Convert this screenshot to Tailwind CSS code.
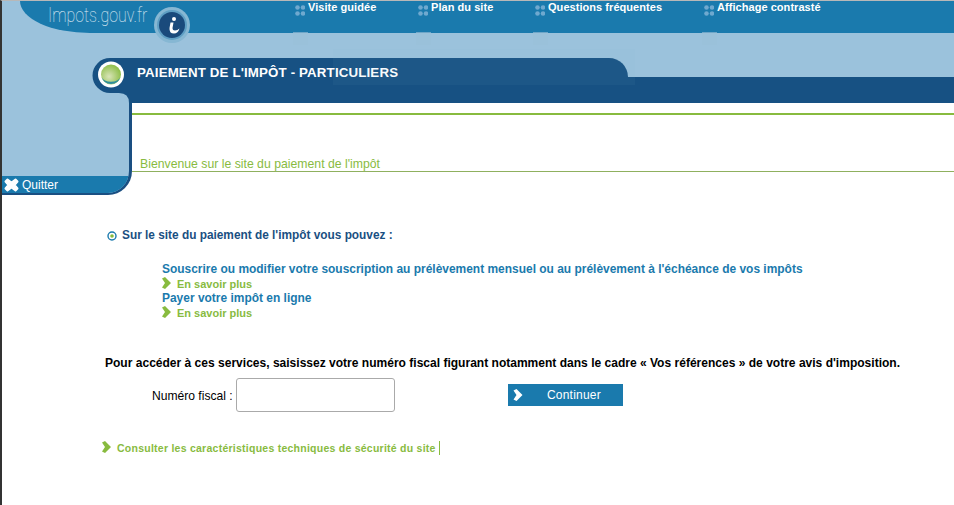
<!DOCTYPE html>
<html lang="fr">
<head>
<meta charset="utf-8">
<title>Paiement de l'impôt</title>
<script src="https://cdn.jsdelivr.net/npm/@tailwindcss/browser@4"></script>
</head>
<body class="bg-white overflow-hidden font-['Liberation_Sans',Arial,sans-serif]">
<div class="relative h-[505px] w-[954px] border-l-2 border-[#333333] border-t border-t-[#b8b8b8]">

  <!-- top bar -->
  <div class="flex h-[32px] bg-[#9bc2dc]">
    <div class="w-[18px]"></div>
    <div class="flex-1 flex bg-[#1a7aad] rounded-bl-[70px_32px]">
      <div class="w-[275px] pl-[28px] pt-[3px]">
        <div class="w-[100px] origin-left scale-x-[.76] text-[21px] leading-[22px] font-thin text-[#e3f0f7] font-['Roboto',sans-serif] whitespace-nowrap">Impots.gouv.fr</div>
      </div>
      <a class="relative w-[123px] flex items-start gap-[3px] text-[11px] leading-[12px] font-bold tracking-[0.05px] text-white">
        <svg class="mt-[4px] shrink-0" width="10" height="11" viewBox="0 0 10 11"><g fill="#6fa9cf"><circle cx="2.5" cy="2.5" r="2.3"/><circle cx="8" cy="2.5" r="2.3"/><circle cx="2.5" cy="8.5" r="2.3"/><circle cx="8" cy="8.5" r="2.3"/></g></svg>
        <span>Visite guidée</span>
        <i class="absolute -left-[2px] top-[31px] w-[15px] h-[13px] border-t border-[#6ea6c8] bg-[#9ac1da]"></i>
      </a>
      <a class="relative w-[117px] flex items-start gap-[3px] text-[11px] leading-[12px] font-bold tracking-[0.05px] text-white">
        <svg class="mt-[4px] shrink-0" width="10" height="11" viewBox="0 0 10 11"><g fill="#6fa9cf"><circle cx="2.5" cy="2.5" r="2.3"/><circle cx="8" cy="2.5" r="2.3"/><circle cx="2.5" cy="8.5" r="2.3"/><circle cx="8" cy="8.5" r="2.3"/></g></svg>
        <span>Plan du site</span>
        <i class="absolute -left-[2px] top-[31px] w-[15px] h-[13px] border-t border-[#6ea6c8] bg-[#9ac1da]"></i>
      </a>
      <a class="relative w-[169px] flex items-start gap-[3px] text-[11px] leading-[12px] font-bold tracking-[0.05px] text-white">
        <svg class="mt-[4px] shrink-0" width="10" height="11" viewBox="0 0 10 11"><g fill="#6fa9cf"><circle cx="2.5" cy="2.5" r="2.3"/><circle cx="8" cy="2.5" r="2.3"/><circle cx="2.5" cy="8.5" r="2.3"/><circle cx="8" cy="8.5" r="2.3"/></g></svg>
        <span>Questions fréquentes</span>
        <i class="absolute -left-[2px] top-[31px] w-[15px] h-[13px] border-t border-[#6ea6c8] bg-[#9ac1da]"></i>
      </a>
      <a class="relative flex items-start gap-[3px] text-[11px] leading-[12px] font-bold tracking-[0.05px] text-white">
        <svg class="mt-[4px] shrink-0" width="10" height="11" viewBox="0 0 10 11"><g fill="#6fa9cf"><circle cx="2.5" cy="2.5" r="2.3"/><circle cx="8" cy="2.5" r="2.3"/><circle cx="2.5" cy="8.5" r="2.3"/><circle cx="8" cy="8.5" r="2.3"/></g></svg>
        <span>Affichage contrasté</span>
        <i class="absolute -left-[2px] top-[31px] w-[15px] h-[13px] border-t border-[#6ea6c8] bg-[#9ac1da]"></i>
      </a>
    </div>
  </div>

  <!-- light band -->
  <div class="h-[25px] bg-[#9bc2dc]"></div>

  <!-- title + side panel -->
  <div class="flex">
    <div class="w-[130px] h-[137px] flex flex-col justify-end bg-[#9bc2dc] border-r-[3px] border-b-[2px] border-[#1a4f82] rounded-br-[24px] overflow-hidden">
      <div class="h-[17px] flex items-center gap-[3px] pl-[2px] bg-[#1a7aad] text-[12px] text-white">
        <svg width="15" height="14" viewBox="0 0 15 14"><path d="M3.5 1.5 L7.5 4.5 L11.5 1.5 L13.5 3.5 L10.5 7 L13.5 10.5 L11.5 12.5 L7.5 9.5 L3.5 12.5 L1.5 10.5 L4.5 7 L1.5 3.5 Z" fill="#fff" stroke="#fff" stroke-width="2" stroke-linejoin="round"/></svg>
        <span>Quitter</span>
      </div>
    </div>
    <div class="flex-1">
      <div class="flex h-[19px] bg-[#9bc2dc]">
        <div class="w-[496px] bg-[#175183] rounded-tr-[22px] pl-[5px] pt-[7px] text-[13.3px] leading-[15px] font-bold tracking-[0.15px] text-white whitespace-nowrap">PAIEMENT DE L'IMPÔT - PARTICULIERS</div>
      </div>
      <div class="h-[26px] bg-[#175183]"></div>
      <div class="mt-[10px] h-[2px] bg-[#88bb3f]"></div>
      <div class="h-[57px] pl-[8px] pt-[42px] border-b border-[#8fb05e] text-[12.25px] leading-[15px] text-[#88bb3f]">Bienvenue sur le site du paiement de l'impôt</div>
    </div>
  </div>

  <!-- main content -->
  <div class="pt-[33px]">
    <div class="flex items-center gap-[5px] pl-[105px] h-[16px] text-[11.85px] font-bold text-[#1a4f82]">
      <svg width="10" height="10" viewBox="0 0 10 10"><circle cx="5" cy="5" r="4" fill="#fff" stroke="#1a7aad" stroke-width="1.4"/><circle cx="5" cy="5" r="1.8" fill="#88bb3f"/></svg>
      <span>Sur le site du paiement de l'impôt vous pouvez :</span>
    </div>
    <div class="pl-[160px] pt-[18px]">
      <div class="h-[15px] text-[11.96px] leading-[15px] font-bold text-[#1a7aad]">Souscrire ou modifier votre souscription au prélèvement mensuel ou au prélèvement à l'échéance de vos impôts</div>
      <div class="h-[14px] flex items-center gap-[6px] text-[11px] font-bold text-[#88bb3f]">
        <svg width="9" height="12" viewBox="0 0 9 12" class="-mt-[2px]"><path d="M0 1.5 L3 0 L9 6 L3 12 L0 10.5 L3 6 Z" fill="#88bb3f"/></svg>
        <span>En savoir plus</span>
      </div>
      <div class="h-[15px] text-[11.96px] leading-[15px] font-bold text-[#1a7aad]">Payer votre impôt en ligne</div>
      <div class="h-[14px] flex items-center gap-[6px] text-[11px] font-bold text-[#88bb3f]">
        <svg width="9" height="12" viewBox="0 0 9 12" class="-mt-[2px]"><path d="M0 1.5 L3 0 L9 6 L3 12 L0 10.5 L3 6 Z" fill="#88bb3f"/></svg>
        <span>En savoir plus</span>
      </div>
    </div>
    <div class="pl-[103px] pt-[36px] h-[15px] leading-[15px] text-[12.04px] font-bold text-black box-content whitespace-nowrap">Pour accéder à ces services, saisissez votre numéro fiscal figurant notamment dans le cadre « Vos références » de votre avis d'imposition.</div>
    <div class="flex items-center pl-[150px] pt-[7px]">
      <label class="w-[84px] mt-[2px] text-[12.1px] text-black whitespace-nowrap">Numéro fiscal :</label>
      <input type="text" class="w-[159px] h-[34px] bg-white border border-[#aaaaaa] rounded-[3px]">
      <button class="ml-[113px] w-[115px] h-[22px] flex items-center bg-[#1a7aad] text-[12px] tracking-[0.2px] text-white">
        <svg class="ml-[5px]" width="10" height="12" viewBox="0 0 9 12"><path d="M0 1.5 L3 0 L9 6 L3 12 L0 10.5 L3 6 Z" fill="#fff"/></svg>
        <span class="ml-[24px]">Continuer</span>
      </button>
    </div>
    <div class="flex items-center pl-[100px] pt-[29px]">
      <svg width="9" height="12" viewBox="0 0 9 12" class="-mt-[2px]"><path d="M0 1.5 L3 0 L9 6 L3 12 L0 10.5 L3 6 Z" fill="#88bb3f"/></svg>
      <span class="ml-[6px] pr-[3px] h-[14px] leading-[14px] border-r border-[#88bb3f] text-[10.5px] font-bold tracking-[0.25px] text-[#88bb3f]">Consulter les caractéristiques techniques de sécurité du site</span>
    </div>
  </div>

  <!-- faint texture around the title tab -->
  <div class="absolute left-[331px] top-[48px] w-[302px] h-[36px] bg-[#8cb8cc]/[.06]"></div>

  <!-- logo badge overlay -->
  <div class="absolute left-[152px] top-[6px] w-[36px] h-[36px] rounded-full bg-[#86b7d3] flex items-center justify-center">
    <div class="w-[26px] h-[26px] rounded-full bg-[#1a4a7c] ring-2 ring-[#5f9fc4]">
      <svg width="26" height="26" viewBox="0 0 26 26"><circle cx="15" cy="7" r="2" fill="#fff"/><path d="M11.5 10.5 H14.5 L13.5 16 Q13.5 18.5 16 18.5 Q18.5 18.5 20.5 16.5 Q19 21.5 15 21.5 Q10 21.5 10.5 16 Z" fill="#fff"/></svg>
    </div>
  </div>

  <!-- round title cap overlay -->
  <svg class="absolute left-[86px] top-[57px]" width="46" height="48" viewBox="0 0 46 48">
    <defs><radialGradient id="ball" cx="0.4" cy="0.6" r="0.7"><stop offset="0" stop-color="#d9e4b8"/><stop offset="1" stop-color="#84b93a"/></radialGradient></defs>
    <path d="M44 0 H22 A17.5 17.5 0 0 0 22 35 H31 Q41 35 41 45 V48 H44 Z" fill="#175183"/>
    <circle cx="23" cy="16.5" r="13" fill="#fff"/>
    <circle cx="23" cy="16.5" r="10" fill="url(#ball)"/>
    <path d="M13.5 19 A10 10 0 0 0 32.5 19 A10 7 0 0 1 13.5 19 Z" fill="#2f8d9c"/>
  </svg>
</div>
</body>
</html>
